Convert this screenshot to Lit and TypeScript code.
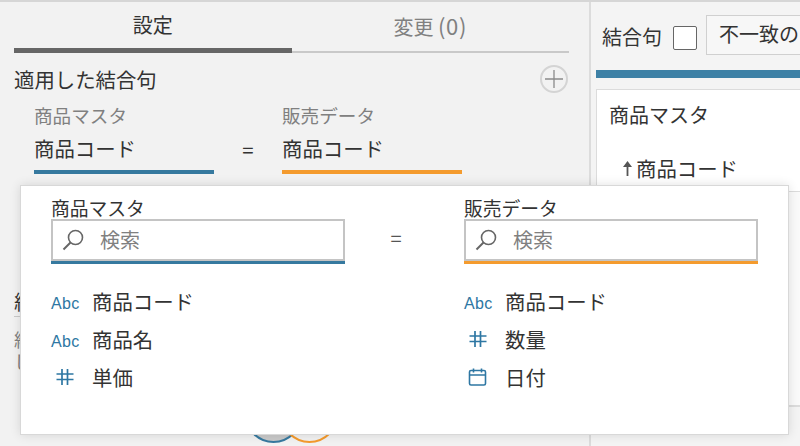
import { LitElement, html, css } from "lit";
import { customElement } from "lit/decorators.js";

const search = html`<svg class="mag" width="24" height="24" viewBox="0 0 24 24" fill="none" stroke="#666" stroke-width="1.6"><circle cx="13.5" cy="9.5" r="7"/><path d="M8.5 14.5 1.5 21.5" stroke-width="2"/></svg>`;
const hash = html`<svg class="ic" width="20" height="20" viewBox="0 0 20 20" fill="none" stroke="#2e77a3" stroke-width="1.7"><path d="M7 2v16M12.5 2v16M1.5 7h17M1.5 12.5h17"/></svg>`;
const cal = html`<svg class="ic" width="20" height="20" viewBox="0 0 20 20" fill="none" stroke="#2e77a3" stroke-width="1.6"><rect x="1.5" y="3.5" width="16" height="14.5" rx="1.5"/><path d="M1.5 8h16M5.5 1.5v4M13.5 1.5v4"/></svg>`;
const abc = html`<span class="abc">Abc</span>`;

@customElement("app-root")
export class AppRoot extends LitElement {
  static styles = css`
    :host { display: block; width: 800px; height: 446px; }
    * { box-sizing: border-box; }
    .page {
      position: relative; width: 800px; height: 446px; overflow: hidden;
      display: flex; background: #f2f2f2; border-top: 2px solid #d6d6d6;
      font-family: "Noto Sans CJK JP", "Liberation Sans", sans-serif; font-size: 20.4px; color: #333; line-height: 28px;
    }
    .left { width: 591px; flex: none; border-right: 2px solid #dcdcdc; padding: 0 20px 0 14px; display: flex; flex-direction: column; }
    .tabs { display: flex; height: 51px; }
    .tab { flex: 1; text-align: center; padding-top: 9px; border-bottom: 2px solid #c9c9c9; color: #808080; height: 51px; font-size: 20px; }
    .tab.on { color: #333; border-bottom: 5px solid #666; }
    .count { font-size: 22px; letter-spacing: .6px; }
    .head { display: flex; justify-content: space-between; align-items: center; margin-top: 11px; height: 30px; color: #333; }
    .plus { width: 28px; height: 28px; border-radius: 50%; border: 2px solid #d4d4d4; display: flex; align-items: center; justify-content: center; margin-right: 1px; }
    .clause { display: grid; grid-template-columns: 180px 68px 180px; padding-left: 20px; margin-top: 7px; }
    .clause .name { font-size: 18.6px; color: #808080; height: 28px; }
    .clause .val { height: 36px; padding-top: 5px; color: #333; }
    .clause .bar { height: 3.5px; margin-top: 5px; }
    .eq { text-align: center; padding-top: 34px; }
    .blue { background: #36799f; }
    .orange { background: #f49b2e; }
    .lower { margin-top: 113px; }
    .lower .t { height: 28px; }
    .lower .rule { height: 1px; background: #c9c9c9; margin-top: 1px; width: 40px; }
    .lower .d { font-size: 18px; color: #808080; line-height: 22px; margin-top: 11px; }
    .venn { position: absolute; left: 240px; top: 380px; }
    .right { flex: 1; padding-left: 5px; min-width: 0; background: #f4f4f4; }
    .rhead { display: flex; align-items: center; height: 68px; padding-left: 6px; white-space: nowrap; }
    .rhead .lab { padding-top: 2px; font-size: 20px; }
    .check { width: 24px; height: 24px; border: 1.5px solid #666; border-radius: 2px; background: #fff; margin: 4px 9px 0 11px; flex: none; }
    .select { width: 200px; height: 40px; border: 1.5px solid #d0d0d0; background: #f7f7f7; padding: 4px 0 0 12px; flex: none; margin-bottom: 3px; font-size: 20px; }
    .rbar { height: 8px; background: #3e81a6; }
    .card { margin-top: 11px; background: #fff; border: 1px solid #dcdcdc; border-right: 0; padding: 11px 12px; height: 103px; font-size: 20px; }
    .card .up { margin: 25px 0 0 12px; display: flex; align-items: center; font-size: 20.4px; }
    .card .up svg { margin-right: 2px; }
    .card2 { background: #fafafa; border: 1px solid #dcdcdc; border-width: 0 0 2px 1px; height: 215px; }
    .pop {
      position: absolute; left: 20px; top: 183px; width: 769px; height: 250px; background: #fff;
      border: 1px solid #d8d8d8; box-shadow: 0 0 10px rgba(0,0,0,.12);
      display: grid; grid-template-columns: 30px 294px 119px 294px; padding-top: 9px;
    }
    .title { font-size: 18.8px; color: #333; height: 24px; line-height: 26px; }
    .box { height: 42px; display: flex; align-items: center; padding-left: 9px; color: #808080; background: #fff; border: 2px solid #c4c4c4; font-size: 20px; }
    .box .mag { margin-right: 14px; }
    .line { height: 3px; }
    .eq2 { text-align: center; padding: 17px 17px 0 0; color: #555; font-size: 20px; line-height: 28px; margin-top: 12px; }
    ul { list-style: none; margin: 18px 0 0; padding: 0; display: flex; flex-direction: column; }
    li { display: flex; align-items: center; height: 38px; color: #333; }
    .icw { width: 41px; flex: none; display: flex; }
    .abc { font-family: "Liberation Sans", sans-serif; font-size: 16px; color: #2e77a3; letter-spacing: .3px; margin-top: 5px; }
    .ic { margin-left: 4px; }
  `;

  render() {
    return html`<div class="page">
      <section class="left">
        <div class="tabs"><div class="tab on">設定</div><div class="tab">変更 <span class="count">(0)</span></div></div>
        <div class="head"><span>適用した結合句</span>
          <span class="plus"><svg width="18" height="18" viewBox="0 0 18 18" stroke="#8a8a8a" stroke-width="1.3"><path d="M9 0v18M0 9h18"/></svg></span></div>
        <div class="clause">
          <div><div class="name">商品マスタ</div><div class="val">商品コード</div><div class="bar blue"></div></div>
          <div class="eq">=</div>
          <div><div class="name">販売データ</div><div class="val">商品コード</div><div class="bar orange"></div></div>
        </div>
        <div class="lower"><div class="t">結</div><div class="rule"></div><div class="d">結<br />し</div></div>
        <svg class="venn" width="100" height="64" viewBox="0 0 100 64" fill="none" stroke-width="2">
          <circle cx="33.5" cy="32" r="28" stroke="#36799f" fill="#c9c9c9" />
          <circle cx="69.5" cy="32" r="28" stroke="#f49b2e" />
        </svg>
      </section>
      <section class="right">
        <div class="rhead"><span class="lab">結合句</span><span class="check"></span><div class="select">不一致の</div></div>
        <div class="rbar"></div>
        <div class="card">商品マスタ
          <div class="up"><svg width="13" height="20" viewBox="0 0 13 20" fill="#555"><path d="M6.5 3 11 9H7.4v9H5.6V9H2z"/></svg>商品コード</div>
        </div>
        <div class="card2"></div>
      </section>
      <div class="pop">
        <div></div>
        <div><div class="title">商品マスタ</div><div class="box">${search}検索</div><div class="line blue"></div>
          <ul><li><span class="icw">${abc}</span>商品コード</li><li><span class="icw">${abc}</span>商品名</li><li><span class="icw">${hash}</span>単価</li></ul></div>
        <div class="eq2">=</div>
        <div><div class="title">販売データ</div><div class="box">${search}検索</div><div class="line orange"></div>
          <ul><li><span class="icw">${abc}</span>商品コード</li><li><span class="icw">${hash}</span>数量</li><li><span class="icw">${cal}</span>日付</li></ul></div>
      </div>
    </div>`;
  }
}
